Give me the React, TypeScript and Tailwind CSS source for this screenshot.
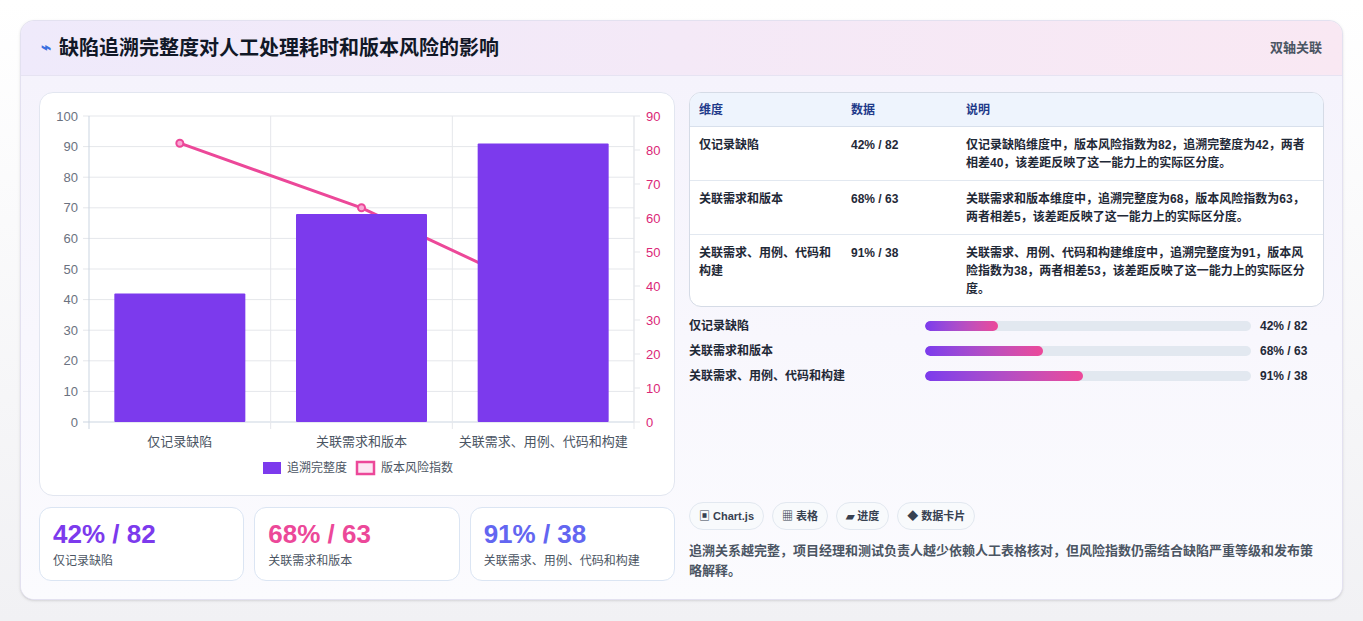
const F = { fontFamily: '"Liberation Sans","Noto Sans CJK SC",sans-serif' };

function Chart() {
  const L = 49, R = 594, T = 23, B = 329;
  const yl = (v: number) => B - (v / 100) * (B - T);
  const yr = (v: number) => B - (v / 90) * (B - T);
  const cw = (R - L) / 3;
  const cx = (i: number) => L + cw * (i + 0.5);
  const bars = [42, 68, 91];
  const risk = [82, 63, 38];
  const cats = ["仅记录缺陷", "关联需求和版本", "关联需求、用例、代码和构建"];
  return (
    <svg width="634" height="402" className="block" style={F}>
      {[0, 10, 20, 30, 40, 50, 60, 70, 80, 90, 100].map((v) => (
        <g key={v}>
          <line x1={L - 6} x2={R} y1={yl(v)} y2={yl(v)} stroke={v === 0 ? "#cbd5e1" : "#e5e7eb"} />
          <text x={38} y={yl(v) + 4.5} textAnchor="end" fontSize="13" fill="#6b7280">{v}</text>
        </g>
      ))}
      {[0, 10, 20, 30, 40, 50, 60, 70, 80, 90].map((v) => (
        <g key={v}>
          <line x1={R} x2={R + 6} y1={yr(v)} y2={yr(v)} stroke="#e5e7eb" />
          <text x={606} y={yr(v) + 4.5} fontSize="13" fill="#db2777">{v}</text>
        </g>
      ))}
      {[0, 1, 2, 3].map((i) => (
        <line key={i} x1={L + cw * i} x2={L + cw * i} y1={T} y2={B + 7} stroke={i === 0 ? "#cbd5e1" : "#e5e7eb"} />
      ))}
      <line x1={R} x2={R} y1={T} y2={B} stroke="#e5e7eb" />
      <polyline points={risk.map((v, i) => `${cx(i)},${yr(v)}`).join(" ")} fill="none" stroke="#ec4899" strokeWidth="3" />
      {risk.map((v, i) => (
        <circle key={i} cx={cx(i)} cy={yr(v)} r="3.5" fill="#f9a8d4" stroke="#ec4899" strokeWidth="2" />
      ))}
      {bars.map((v, i) => (
        <rect key={i} x={cx(i) - 65.5} y={yl(v)} width="131" height={B - yl(v)} fill="#7c3aed" rx="1" />
      ))}
      {cats.map((c, i) => (
        <text key={i} x={cx(i)} y={353} textAnchor="middle" fontSize="13" fill="#4b5563">{c}</text>
      ))}
      <rect x={223} y={369} width={18} height={12} fill="#7c3aed" />
      <text x={247} y={379} fontSize="12" fill="#4b5563">追溯完整度</text>
      <rect x={317} y={369} width={17} height={12} fill="#fce7f3" stroke="#ec4899" strokeWidth="2.5" />
      <text x={341} y={379} fontSize="12" fill="#4b5563">版本风险指数</text>
    </svg>
  );
}

const rows = [
  ["仅记录缺陷", "42% / 82", "仅记录缺陷维度中，版本风险指数为82，追溯完整度为42，两者相差40，该差距反映了这一能力上的实际区分度。", 42],
  ["关联需求和版本", "68% / 63", "关联需求和版本维度中，追溯完整度为68，版本风险指数为63，两者相差5，该差距反映了这一能力上的实际区分度。", 68],
  ["关联需求、用例、代码和构建", "91% / 38", "关联需求、用例、代码和构建维度中，追溯完整度为91，版本风险指数为38，两者相差53，该差距反映了这一能力上的实际区分度。", 91],
] as const;

export default function App() {
  return (
    <div className="w-[1363px] h-[621px] pt-[20px] px-[20px] bg-gradient-to-b from-white to-[#f1f1f4]" style={F}>
      <div className="h-[580px] rounded-[14px] border border-[#e3e1f0] bg-[#f8f8fd] shadow-sm overflow-hidden flex flex-col">
        <div className="h-[55px] shrink-0 flex items-center justify-between px-[20px] bg-gradient-to-r from-[#efeafb] to-[#f9e8f3] border-b border-[#e6e3f2]">
          <div className="flex items-center gap-[8px]">
            <span className="text-[#3b6fe0] text-[17px] font-bold">⌁</span>
            <span className="text-[20px] font-bold text-[#111827]">缺陷追溯完整度对人工处理耗时和版本风险的影响</span>
          </div>
          <span className="text-[13px] text-[#4b5563] font-bold">双轴关联</span>
        </div>
        <div className="flex gap-[14px] px-[18px] pt-[16px] bg-gradient-to-b from-[#f5f3fc] to-[#fbfbfe] flex-1">
          <div className="w-[636px] flex flex-col gap-[11px]">
            <div className="h-[404px] rounded-[14px] border border-[#e2e6f0] bg-white">
              <Chart />
            </div>
            <div className="flex gap-[10px]">
              {[["42% / 82", "仅记录缺陷", "text-[#7c3aed]"], ["68% / 63", "关联需求和版本", "text-[#ec4899]"], ["91% / 38", "关联需求、用例、代码和构建", "text-[#6366f1]"]].map(([v, l, c]) => (
                <div key={v} className="flex-1 h-[74px] rounded-[12px] border border-[#dbe5f3] bg-white px-[13px] pt-[10px]">
                  <div className={`text-[26px] leading-[32px] font-bold ${c}`}>{v}</div>
                  <div className="text-[12px] text-[#4b5563] mt-[2px]">{l}</div>
                </div>
              ))}
            </div>
          </div>
          <div className="w-[635px] flex flex-col">
            <div className="rounded-[12px] border border-[#d5dbe6] bg-white overflow-hidden text-[12px] text-[#1f2937]">
              <div className="flex h-[34px] items-center bg-[#eef4fd] border-b border-[#d8e0ec] font-bold text-[#1e3a8a]">
                <div className="w-[161px] pl-[9px]">维度</div>
                <div className="w-[115px]">数据</div>
                <div className="flex-1">说明</div>
              </div>
              {rows.map((r, i) => (
                <div key={i} className={`flex pt-[9px] pb-[8px] leading-[18px] font-bold ${i < 2 ? "border-b border-[#e2e8f0]" : ""}`}>
                  <div className="w-[161px] pl-[9px] pr-[18px]">{r[0]}</div>
                  <div className="w-[115px]">{r[1]}</div>
                  <div className="flex-1 pr-[14px]">{r[2]}</div>
                </div>
              ))}
            </div>
            <div className="flex flex-col gap-[7px] mt-[10px] text-[12px] font-bold text-[#1f2937]">
              {rows.map((r, i) => (
                <div key={i} className="flex items-center h-[18px]">
                  <div className="w-[236px]">{r[0]}</div>
                  <div className="w-[326px] h-[10px] rounded-full bg-[#e2e8f0] overflow-hidden">
                    <div className="h-full rounded-full bg-gradient-to-r from-[#7c3aed] to-[#ec4899]" style={{ width: `${(r[3] / 91) * 48.5}%` }} />
                  </div>
                  <div className="pl-[9px]">{r[1]}</div>
                </div>
              ))}
            </div>
            <div className="flex-1" />
            <div className="flex gap-[8px] text-[11px] font-bold text-[#374151]">
              {["▣ Chart.js", "▦ 表格", "▰ 进度", "◆ 数据卡片"].map((t) => (
                <div key={t} className="h-[28px] px-[9px] flex items-center rounded-full border border-[#e2e8f0] bg-[#f8fafc]">{t}</div>
              ))}
            </div>
            <div className="mt-[11px] mb-[18px] text-[13px] leading-[20px] text-[#4b5563] font-bold">追溯关系越完整，项目经理和测试负责人越少依赖人工表格核对，但风险指数仍需结合缺陷严重等级和发布策略解释。</div>
          </div>
        </div>
      </div>
    </div>
  );
}
